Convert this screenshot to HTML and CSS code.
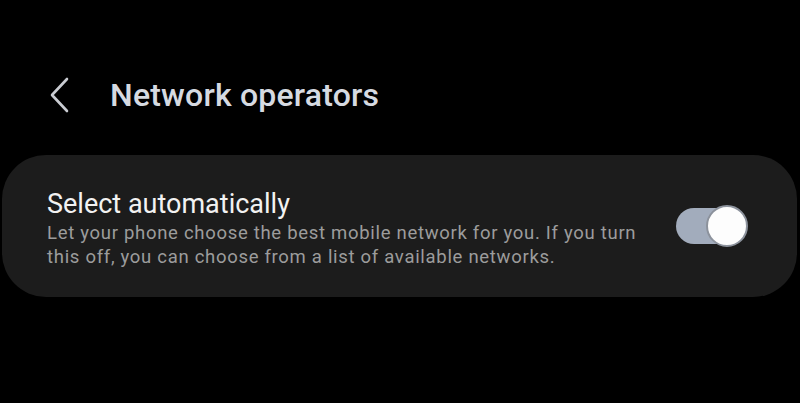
FILE: index.html
```html
<!DOCTYPE html>
<html>
<head>
<meta charset="utf-8">
<link rel="stylesheet" href="styles.css">
</head>
<body>
<div class="screen">
  <header class="appbar">
    <svg class="back" width="24" height="36" viewBox="0 0 24 36">
      <path d="M19 2 L4 18 L19 34" fill="none" stroke="#c9ccd2" stroke-width="2.6" stroke-linecap="round" stroke-linejoin="round"/>
    </svg>
    <h1 class="title">Network operators</h1>
  </header>
  <section class="card">
    <div class="text">
      <div class="item-title">Select automatically</div>
      <div class="item-sub">Let your phone choose the best mobile network for you. If you turn this off, you can choose from a list of available networks.</div>
    </div>
    <div class="switch"><div class="thumb"></div></div>
  </section>
</div>
</body>
</html>
```

FILE: styles.css
```css
html, body {
  margin: 0;
  padding: 0;
  background: #000;
}
.screen {
  width: 800px;
  height: 403px;
  background: #000;
  font-family: Roboto, "Noto Sans", sans-serif;
  overflow: hidden;
}
.appbar {
  display: flex;
  align-items: center;
  height: 155px;
  padding: 34px 0 0 48px;
  box-sizing: border-box;
}
.back {
  display: block;
}
.title {
  margin: 0 0 0 38px;
  font-size: 32px;
  font-weight: 500;
  color: #d6dae1;
  letter-spacing: 0.2px;
}
.card {
  margin: 0 3px 0 2px;
  height: 142px;
  border-radius: 44px;
  background: #1c1c1c;
  display: flex;
  align-items: center;
  padding: 0 55px 0 45px;
  box-sizing: border-box;
}
.text {
  flex: 1;
  padding-top: 4px;
}
.item-title {
  color: #f2f2f2;
  font-size: 27px;
  line-height: 32px;
}
.item-sub {
  color: #9c9c9c;
  font-size: 18.5px;
  letter-spacing: 0.7px;
  line-height: 24px;
  max-width: 600px;
  margin-top: 1px;
}
.switch {
  position: relative;
  width: 66px;
  height: 36px;
  border-radius: 18px;
  background: #a2acbc;
  margin-left: 30px;
}
.thumb {
  position: absolute;
  right: -6px;
  top: -3px;
  width: 38px;
  height: 38px;
  border-radius: 50%;
  background: #fdfdfd;
  border: 2px solid #8c929c;
}
```
